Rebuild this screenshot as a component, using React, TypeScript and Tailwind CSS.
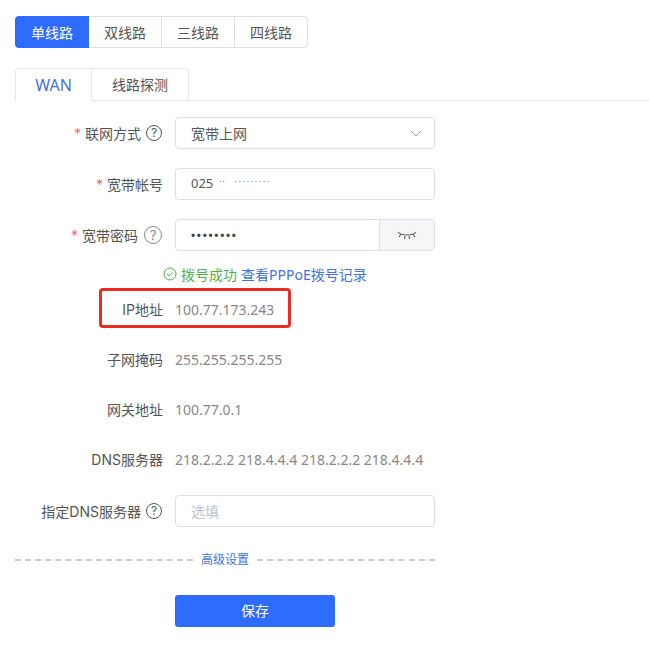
function Help({ className }: { className: string }) {
  return (
    <span className={`flex items-center justify-center rounded-full border leading-none ${className}`}>?</span>
  );
}

function Label({ text, required, help, large }: { text: string; required?: boolean; help?: boolean; large?: boolean }) {
  return (
    <div className="w-[160px] shrink-0 flex items-center justify-end pr-[12px] text-[14px] text-[#555] font-['Inter','Noto_Sans_CJK_SC',sans-serif]">
      {required && <span className="text-[#f56c6c] mr-[4px]">*</span>}
      <span>{text}</span>
      {help && !large && <Help className="w-[16px] h-[16px] ml-[5px] mr-[1px] text-[12px] border-[#555] text-[#555]" />}
      {help && large && <Help className="w-[18px] h-[18px] ml-[6px] mr-[1px] text-[13px] border-[#888] text-[#888]" />}
    </div>
  );
}

function Row({ mt, children }: { mt: string; children: React.ReactNode }) {
  return <div className={`flex items-center h-[32px] ${mt}`}>{children}</div>;
}

function Value({ children }: { children: React.ReactNode }) {
  return <div className="text-[14px] text-[#888]">{children}</div>;
}

const segments = ["单线路", "双线路", "三线路", "四线路"];

export default function App() {
  return (
    <div className="relative w-[649px] h-[650px] bg-white pl-[15px] pt-[16px] font-['Noto_Sans','Noto_Sans_CJK_SC',sans-serif] overflow-hidden">
      <div className="flex w-[293px] h-[32px] text-[14px] text-[#555]">
        {segments.map((s, i) => (
          <div
            key={s}
            className={
              i === 0
                ? "w-[74px] flex items-center justify-center bg-[#2e6bff] text-white rounded-l-[4px]"
                : i === 3
                  ? "w-[73px] flex items-center justify-center border border-l-0 border-[#dcdfe6] rounded-r-[4px]"
                  : "w-[73px] flex items-center justify-center border border-l-0 border-[#dcdfe6]"
            }
          >
            {s}
          </div>
        ))}
      </div>

      <div className="flex h-[33px] mt-[20px] border-b border-[#e4e7ed] text-[14px]">
        <div className="w-[77px] h-[33px] flex items-center justify-center border border-b-0 border-[#e4e7ed] rounded-tl-[4px] bg-white text-[#3f72e0] text-[16px]">WAN</div>
        <div className="w-[97px] h-[32px] flex items-center justify-center border border-l-0 border-[#e4e7ed] border-b-0 rounded-tr-[4px] text-[#555]">线路探测</div>
      </div>

      <Row mt="mt-[16px]">
        <Label text="联网方式" required help />
        <div className="w-[260px] h-[32px] flex items-center justify-between border border-[#dcdfe6] rounded-[4px] pl-[15px] pr-[12px] text-[14px] text-[#555]">
          <span>宽带上网</span>
          <svg width="12" height="12" viewBox="0 0 12 12" fill="none" stroke="#aaa" strokeWidth="1">
            <path d="M1 4l5 5 5-5" />
          </svg>
        </div>
      </Row>

      <Row mt="mt-[19px]">
        <Label text="宽带帐号" required />
        <div className="w-[260px] h-[32px] flex items-center border border-[#dcdfe6] rounded-[4px] pl-[15px] text-[14px] text-[#555]">
          <span className="text-[13px]">025</span>
          <span className="ml-[6px] text-[8px] tracking-[1px] text-[#777] mb-[4px]">··</span>
          <span className="ml-[9px] text-[8px] tracking-[1.9px] text-[#777] mb-[4px]">·········</span>
        </div>
      </Row>

      <Row mt="mt-[19px]">
        <Label text="宽带密码" required help large />
        <div className="w-[260px] h-[32px] flex items-stretch border border-[#dcdfe6] rounded-[4px] text-[14px] text-[#555]">
          <div className="flex-1 flex items-center pl-[15px] text-[11px] tracking-[1.7px] font-bold text-[#444]">••••••••</div>
          <div className="w-[55px] flex items-center justify-center bg-[#f5f6f7] border-l border-[#dcdfe6] rounded-r-[4px]">
            <svg width="20" height="12" viewBox="0 0 20 12" fill="none" stroke="#666" strokeWidth="1.2">
              <path d="M1 3c3 4 15 4 18 0M4 5L2 8M8 7l-.5 3M12 7l.5 3M16 5l2 3" />
            </svg>
          </div>
        </div>
      </Row>

      <div className="flex items-center h-[24px] mt-[11px] pl-[148px] text-[14px]">
        <svg width="14" height="14" viewBox="0 0 14 14" fill="none" stroke="#52b04d" strokeWidth="1" className="mr-[4px]">
          <circle cx="7" cy="7" r="6" />
          <path d="M4.3 7l2 2 3.4-3.6" />
        </svg>
        <span className="text-[#52b04d]">拨号成功</span>
        <span className="text-[#3f72e0] ml-[4px]">查看PPPoE拨号记录</span>
      </div>

      <Row mt="mt-[7px]">
        <Label text="IP地址" />
        <Value>100.77.173.243</Value>
      </Row>
      <Row mt="mt-[18px]">
        <Label text="子网掩码" />
        <Value>255.255.255.255</Value>
      </Row>
      <Row mt="mt-[18px]">
        <Label text="网关地址" />
        <Value>100.77.0.1</Value>
      </Row>
      <Row mt="mt-[18px]">
        <Label text="DNS服务器" />
        <Value>218.2.2.2 218.4.4.4 218.2.2.2 218.4.4.4</Value>
      </Row>

      <Row mt="mt-[20px]">
        <Label text="指定DNS服务器" help />
        <div className="w-[260px] h-[32px] flex items-center border border-[#dcdfe6] rounded-[4px] pl-[15px] text-[14px] text-[#c0c4cc]">选填</div>
      </Row>

      <div className="flex items-center w-[420px] mt-[24px] h-[18px]">
        <div className="flex-1 border-t-[2px] border-dashed border-[#ccc]" />
        <span className="px-[8px] text-[12px] text-[#3f72e0]">高级设置</span>
        <div className="flex-1 border-t-[2px] border-dashed border-[#ccc]" />
      </div>

      <div className="pl-[160px] mt-[26px]">
        <div className="w-[160px] h-[32px] flex items-center justify-center bg-[#2e6bff] rounded-[3px] text-[14px] text-white pb-[1px]">保存</div>
      </div>

      <div className="absolute left-[99px] top-[288px] w-[192px] h-[40px] border-[3px] border-[#ee2a24] rounded-[4px]" />
    </div>
  );
}
